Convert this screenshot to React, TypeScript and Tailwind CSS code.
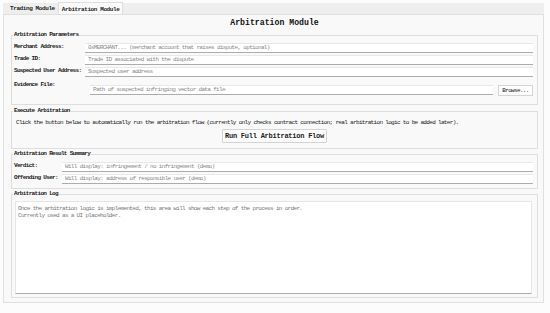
import React from "react";

const tiny = "text-[6px] leading-[8px] tracking-[-0.67px]";

function Entry({ text, className = "" }: { text: string; className?: string }) {
  return (
    <div
      className={
        "h-[10px] bg-white border-t border-t-[#e8e8e8] border-b border-b-[#acacac] px-[3px] text-[6px] leading-[8px] tracking-[-0.67px] text-[#8a8a8a] whitespace-nowrap overflow-hidden " +
        className
      }
    >
      {text}
    </div>
  );
}

function Group({ title, className, children }: { title: string; className: string; children: React.ReactNode }) {
  return (
    <fieldset className={"min-w-0 p-0 border border-[#dedede] " + className}>
      <legend className={"ml-[1px] px-[1px] font-bold text-[#1b1b1b] " + tiny}>{title}</legend>
      {children}
    </fieldset>
  );
}

export default function App() {
  const params = [
    { label: "Merchant Address:", text: "0xMERCHANT... (merchant account that raises dispute, optional)" },
    { label: "Trade ID:", text: "Trade ID associated with the dispute" },
    { label: "Suspected User Address:", text: "Suspected user address" },
  ];

  return (
    <div className="w-[550px] h-[313px] bg-[#fcfcfc] pl-[3px] pt-[3px] font-['Liberation_Mono',monospace] text-[#1b1b1b]">
      <div className="w-[541px]">
        {/* tabs */}
        <div className="flex h-[11px] bg-[#eeeeee]">
          <div className={"pl-[7px] pr-[3px] h-[11px] pt-[2px] font-bold tracking-[-0.4px] text-[6px] leading-[8px]"}>
            Trading Module
          </div>
          <div className="h-[12px] -mt-[1px] px-[3px] pt-[3px] bg-[#fafafa] border border-b-0 border-[#dedede] font-bold tracking-[-0.4px] text-[6px] leading-[8px]">
            Arbitration Module
          </div>
        </div>

        <div className="h-[289px] border border-[#e0e0e0] bg-[#f9f9f9] pl-[7px] pr-[5px] pt-[2px]">
          <div className="text-center font-bold text-[8.2px] leading-[12px] text-[#111] mb-[2px]">Arbitration Module</div>

          {/* parameters */}
          <Group title="Arbitration Parameters" className="h-[74px]">
            <div className="pt-[4px] pl-[2px] pr-[4px]">
              {params.map((p) => (
                <div key={p.label} className="flex h-[10px] mb-[2px]">
                  <div className={"w-[71px] shrink-0 font-bold " + tiny}>{p.label}</div>
                  <Entry text={p.text} className="flex-1" />
                </div>
              ))}
              <div className="flex">
                <div className={"w-[71px] shrink-0 mt-[2px] font-bold " + tiny}>Evidence File:</div>
                <div className="flex-1 flex gap-[5px] pl-[5px] mt-[6px]">
                  <Entry text="Path of suspected infringing vector data file" className="flex-1" />
                  <div className="w-[35px] h-[11px] bg-[#fdfdfd] border border-[#d4d4d4] text-center text-[6px] leading-[9px] tracking-[-0.67px]">
                    Browse...
                  </div>
                </div>
              </div>
            </div>
          </Group>

          {/* execute */}
          <Group title="Execute Arbitration" className="h-[42px] mt-[2px]">
            <div className={"pt-[4px] pl-[4px] whitespace-nowrap text-[#222] " + tiny}>
              Click the button below to automatically run the arbitration flow (currently only checks contract
              connection; real arbitration logic to be added later).
            </div>
            <div className="mx-auto mt-[2px] w-[105px] h-[14px] bg-[#fdfdfd] border border-[#d4d4d4] rounded-[1px] text-center font-bold text-[7px] leading-[12px] tracking-[-0.24px]">
              Run Full Arbitration Flow
            </div>
          </Group>

          {/* summary */}
          <Group title="Arbitration Result Summary" className="h-[39px] mt-[1px]">
            <div className="pt-[4px] pl-[2px] pr-[4px]">
              <div className="flex h-[10px] mb-[2px]">
                <div className={"w-[48px] shrink-0 font-bold " + tiny}>Verdict:</div>
                <Entry text="Will display: infringement / no infringement (demo)" className="flex-1" />
              </div>
              <div className="flex h-[10px]">
                <div className={"w-[48px] shrink-0 font-bold " + tiny}>Offending User:</div>
                <Entry text="Will display: address of responsible user (demo)" className="flex-1" />
              </div>
            </div>
          </Group>

          {/* log */}
          <Group title="Arbitration Log" className="h-[108px] mt-[1px]">
            <div className="pt-[3px] pl-[3px] pr-[5px]">
              <div className="h-[93px] bg-white border border-[#e6e6e6] border-b-[#acacac] pt-[3px] pl-[2px] text-[6px] leading-[7px] tracking-[-0.67px] text-[#7a7a7a] whitespace-nowrap">
                <div>Once the arbitration logic is implemented, this area will show each step of the process in order.</div>
                <div>Currently used as a UI placeholder.</div>
              </div>
            </div>
          </Group>
        </div>
      </div>
    </div>
  );
}
